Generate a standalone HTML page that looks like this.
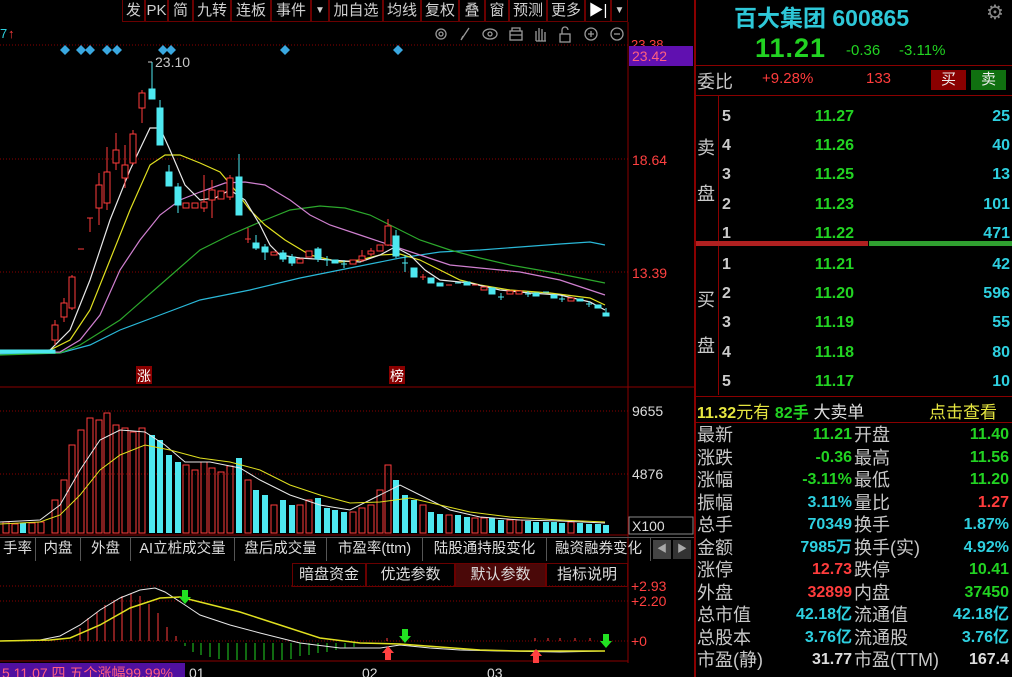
<!DOCTYPE html>
<html><head><meta charset="utf-8"><style>
*{margin:0;padding:0;box-sizing:border-box}
body{width:1012px;height:677px;background:#000;overflow:hidden;position:relative;font-family:"Liberation Sans","Noto Sans CJK SC",sans-serif;color:#c0c0c0}
.a{position:absolute;white-space:nowrap}
.tb{position:absolute;top:0;height:22px;border:1px solid #6a0000;border-top:none;font-size:15px;line-height:21px;text-align:center;color:#d0d0d0}
.r{text-align:right}
.g{color:#22d322}.c{color:#2ed0e0}.rd{color:#ff3c3c}.y{color:#e6e640}
.lab{font-size:18px;color:#c8c8c8}
.num{font-size:16px;font-weight:bold}
.tab{position:absolute;top:538px;height:23px;border-right:1px solid #555;font-size:14.5px;line-height:23px;text-align:center;color:#ddd}
.sb{position:absolute;top:563px;height:24px;border:1px solid #6a0000;font-size:15px;line-height:22px;text-align:center;color:#ddd}
</style></head><body>
<svg class="a" style="left:0;top:0" width="694" height="677">
<!-- borders -->
<line x1="628" y1="22" x2="628" y2="663" stroke="#8a0000"/>
<line x1="0" y1="387" x2="694" y2="387" stroke="#8a0000"/>
<line x1="0" y1="535" x2="628" y2="535" stroke="#8a0000"/>
<line x1="0" y1="661" x2="628" y2="661" stroke="#8a0000"/>
<line x1="0" y1="45" x2="628" y2="45" stroke="#8a0000" stroke-dasharray="1,2"/>
<line x1="0" y1="159" x2="628" y2="159" stroke="#8a0000" stroke-dasharray="1,2"/>
<line x1="0" y1="272" x2="628" y2="272" stroke="#8a0000" stroke-dasharray="1,2"/>
<line x1="0" y1="411" x2="628" y2="411" stroke="#8a0000" stroke-dasharray="1,2"/>
<line x1="0" y1="474" x2="628" y2="474" stroke="#8a0000" stroke-dasharray="1,2"/>
<line x1="0" y1="586" x2="628" y2="586" stroke="#8a0000" stroke-dasharray="1,2"/>
<line x1="0" y1="601" x2="628" y2="601" stroke="#8a0000" stroke-dasharray="1,2"/>
<line x1="0" y1="641" x2="628" y2="641" stroke="#8a0000" stroke-dasharray="1,2"/>
<!-- diamonds -->
<g fill="#3aa8e0">
<path d="M65,45l5,5-5,5-5-5z"/><path d="M81,45l5,5-5,5-5-5z"/><path d="M90,45l5,5-5,5-5-5z"/><path d="M107,45l5,5-5,5-5-5z"/><path d="M117,45l5,5-5,5-5-5z"/><path d="M163,45l5,5-5,5-5-5z"/><path d="M171,45l5,5-5,5-5-5z"/><path d="M285,45l5,5-5,5-5-5z"/><path d="M398,45l5,5-5,5-5-5z"/>
</g>
<!-- icons -->
<g stroke="#999" fill="none" stroke-width="1.3">
<circle cx="441" cy="34" r="5"/><circle cx="441" cy="34" r="2"/>
<path d="M461,40l8-12M461,40l2-4"/>
<ellipse cx="490" cy="34" rx="7" ry="5"/><circle cx="490" cy="34" r="2"/>
<rect x="510" y="31" width="12" height="9"/><path d="M512,31v-3h8v3M510,35h12"/>
<path d="M536,41v-10M539,41v-13M542,41v-12M545,41v-9M536,41h10"/>
<rect x="560" y="34" width="10" height="8"/><path d="M562,34v-4a3,3 0 0 1 6,0"/>
<circle cx="591" cy="34" r="6"/><path d="M588,34h6M591,31v6"/>
<circle cx="617" cy="34" r="6"/><path d="M614,34h6"/>
</g>
<text x="0" y="38" font-size="13" fill="#2ed0e0">7</text><text x="8" y="38" font-size="13" fill="#ff3c3c">↑</text>
<!-- MA lines -->
<g fill="none" stroke-width="1.2">
<polyline stroke="#2ab8d8" points="0,354 60,353 90,345 120,330 160,315 200,300 250,290 300,278 350,268 400,258 440,252 480,250 520,247 560,244 590,242 605,245"/>
<polyline stroke="#2ca82c" points="0,355 60,353 80,345 120,320 160,285 200,250 230,235 260,222 290,210 320,206 345,208 370,215 390,225 420,240 450,250 480,258 510,265 550,272 580,278 605,283"/>
<polyline stroke="#d080d0" points="0,353 60,352 80,340 100,315 120,270 140,240 160,215 180,200 200,192 225,183 245,182 265,185 290,200 310,215 330,225 360,235 390,245 420,255 450,265 480,268 520,272 560,280 590,290 605,295"/>
<polyline stroke="#e0e020" points="0,353 50,350 70,340 90,310 110,260 130,210 150,165 165,155 180,155 200,163 220,172 235,190 250,210 265,225 285,240 310,255 340,262 360,260 380,255 400,254 420,260 440,270 460,280 480,285 510,290 550,293 590,298 605,305"/>
<polyline stroke="#e8e8e8" points="0,352 50,350 70,330 90,280 110,220 130,170 150,128 160,128 170,150 185,185 200,200 215,198 230,190 245,200 260,225 270,245 280,255 300,258 330,260 360,262 380,255 395,247 410,255 425,270 440,280 470,283 500,290 530,293 560,295 590,302 605,310"/>
</g>
<!-- candles: red hollow -->
<g stroke="#ff3c3c" fill="#000" stroke-width="1">
<line x1="55" y1="320" x2="55" y2="345"/><rect x="52" y="325" width="6" height="15"/>
<line x1="64" y1="298" x2="64" y2="322"/><rect x="61" y="303" width="6" height="14"/>
<line x1="72" y1="275" x2="72" y2="310"/><rect x="69" y="277" width="6" height="31"/>
<line x1="78" y1="249" x2="84" y2="249"/>
<path d="M87,218h6M90,218v14"/>
<line x1="99" y1="173" x2="99" y2="225"/><rect x="96" y="185" width="6" height="23"/>
<line x1="107" y1="147" x2="107" y2="210"/><rect x="104" y="172" width="6" height="31"/>
<line x1="116" y1="133" x2="116" y2="170"/><rect x="113" y="150" width="6" height="13"/>
<line x1="125" y1="145" x2="125" y2="188"/><rect x="122" y="165" width="6" height="13"/>
<line x1="133" y1="130" x2="133" y2="165"/><rect x="130" y="134" width="6" height="29"/>
<line x1="142" y1="90" x2="142" y2="123"/><rect x="139" y="93" width="6" height="15"/>
<rect x="183" y="203" width="6" height="5"/><rect x="192" y="203" width="6" height="5"/>
<line x1="204" y1="175" x2="204" y2="212"/><rect x="201" y="202" width="6" height="6"/>
<line x1="212" y1="180" x2="212" y2="218"/><rect x="209" y="190" width="6" height="10"/>
<rect x="218" y="191" width="6" height="8"/>
<line x1="230" y1="175" x2="230" y2="200"/><rect x="227" y="178" width="6" height="19"/>
<line x1="248" y1="228" x2="248" y2="243"/><line x1="245" y1="239" x2="251" y2="239"/>
<rect x="271" y="252" width="6" height="3"/>
<rect x="297" y="259" width="6" height="4"/><rect x="306" y="251" width="6" height="6"/>
<rect x="350" y="260" width="6" height="4"/>
<line x1="362" y1="250" x2="362" y2="262"/><rect x="359" y="256" width="6" height="4"/>
<line x1="371" y1="248" x2="371" y2="256"/><rect x="368" y="251" width="6" height="3"/>
<rect x="377" y="245" width="6" height="6"/>
<line x1="388" y1="219" x2="388" y2="246"/><rect x="385" y="226" width="6" height="19"/>
<line x1="420" y1="277" x2="426" y2="277"/><line x1="423" y1="274" x2="423" y2="280"/>
<line x1="446" y1="285" x2="452" y2="285"/>
<line x1="472" y1="285" x2="478" y2="285"/>
<rect x="481" y="287" width="6" height="3"/>
<rect x="507" y="291" width="6" height="3"/><rect x="516" y="291" width="6" height="3"/>
<rect x="568" y="298" width="6" height="3"/>
</g>
<!-- candles: cyan filled -->
<g stroke="#4ee8f0" fill="#4ee8f0">
<line x1="152" y1="62" x2="152" y2="99"/><rect x="149" y="89" width="6" height="10"/>
<line x1="160" y1="100" x2="160" y2="145"/><rect x="157" y="108" width="6" height="37"/>
<line x1="169" y1="165" x2="169" y2="186"/><rect x="166" y="172" width="6" height="14"/>
<line x1="178" y1="183" x2="178" y2="213"/><rect x="175" y="187" width="6" height="18"/>
<line x1="239" y1="154" x2="239" y2="215"/><rect x="236" y="177" width="6" height="38"/>
<line x1="256" y1="235" x2="256" y2="250"/><rect x="253" y="243" width="6" height="5"/>
<line x1="265" y1="244" x2="265" y2="260"/><rect x="262" y="247" width="6" height="5"/>
<line x1="283" y1="250" x2="283" y2="262"/><rect x="280" y="253" width="6" height="6"/>
<line x1="292" y1="254" x2="292" y2="266"/><rect x="289" y="257" width="6" height="6"/>
<line x1="318" y1="247" x2="318" y2="262"/><rect x="315" y="249" width="6" height="10"/>
<line x1="324" y1="260" x2="330" y2="260"/><line x1="327" y1="256" x2="327" y2="266"/>
<rect x="332" y="260" width="6" height="3"/>
<line x1="341" y1="264" x2="347" y2="264"/><line x1="344" y1="260" x2="344" y2="268"/>
<line x1="396" y1="230" x2="396" y2="258"/><rect x="393" y="236" width="6" height="20"/>
<line x1="402" y1="263" x2="408" y2="263"/><line x1="405" y1="255" x2="405" y2="272"/>
<rect x="411" y="268" width="6" height="9"/>
<rect x="428" y="278" width="6" height="5"/><rect x="437" y="283" width="6" height="3"/>
<line x1="455" y1="283" x2="461" y2="283"/>
<rect x="464" y="282" width="6" height="3"/>
<line x1="489" y1="288" x2="495" y2="288"/><rect x="489" y="288" width="6" height="6"/>
<line x1="498" y1="297" x2="504" y2="297"/><line x1="501" y1="293" x2="501" y2="300"/>
<line x1="525" y1="294" x2="531" y2="294"/><line x1="528" y1="291" x2="528" y2="297"/>
<rect x="533" y="293" width="6" height="3"/>
<line x1="543" y1="292" x2="549" y2="292"/>
<rect x="551" y="295" width="6" height="3"/>
<line x1="559" y1="299" x2="565" y2="299"/><line x1="562" y1="296" x2="562" y2="302"/>
<rect x="577" y="299" width="6" height="2"/>
<line x1="586" y1="304" x2="592" y2="304"/><line x1="589" y1="301" x2="589" y2="307"/>
<rect x="595" y="305" width="6" height="3"/>
<line x1="606" y1="308" x2="606" y2="316"/><rect x="603" y="313" width="6" height="3"/>
<rect x="0" y="350" width="55" height="3"/>
</g>
<path d="M152,62h-4" stroke="#ccc"/><text x="155" y="67" font-size="14" fill="#c8c8c8">23.10</text>
<rect x="136" y="366" width="16" height="18" fill="#8a0000"/><text x="137" y="381" font-size="14" fill="#fff">涨</text>
<rect x="389" y="366" width="16" height="18" fill="#8a0000"/><text x="390" y="381" font-size="14" fill="#fff">榜</text>
<!-- volume -->
<g stroke="#ff3c3c" fill="none">
<rect x="52" y="500" width="6" height="33"/><rect x="61" y="480" width="6" height="53"/><rect x="69" y="445" width="6" height="88"/><rect x="78" y="430" width="6" height="103"/><rect x="87" y="418" width="6" height="115"/><rect x="96" y="420" width="6" height="113"/><rect x="104" y="413" width="6" height="120"/><rect x="113" y="425" width="6" height="108"/><rect x="122" y="428" width="6" height="105"/><rect x="130" y="432" width="6" height="101"/><rect x="139" y="428" width="6" height="105"/>
<rect x="183" y="465" width="6" height="68"/><rect x="192" y="470" width="6" height="63"/><rect x="201" y="462" width="6" height="71"/><rect x="209" y="468" width="6" height="65"/><rect x="218" y="472" width="6" height="61"/><rect x="227" y="466" width="6" height="67"/>
<rect x="245" y="480" width="6" height="53"/><rect x="271" y="505" width="6" height="28"/><rect x="297" y="505" width="6" height="28"/><rect x="306" y="500" width="6" height="33"/><rect x="350" y="512" width="6" height="21"/><rect x="359" y="508" width="6" height="25"/><rect x="368" y="505" width="6" height="28"/><rect x="377" y="490" width="6" height="43"/><rect x="385" y="465" width="6" height="68"/>
<rect x="420" y="505" width="6" height="28"/><rect x="446" y="515" width="6" height="18"/><rect x="472" y="518" width="6" height="15"/><rect x="481" y="518" width="6" height="15"/><rect x="507" y="520" width="6" height="13"/><rect x="516" y="520" width="6" height="13"/><rect x="568" y="522" width="6" height="11"/>
<rect x="3" y="522" width="6" height="11"/><rect x="12" y="524" width="6" height="9"/><rect x="29" y="523" width="6" height="10"/><rect x="38" y="522" width="6" height="11"/>
</g>
<g fill="#4ee8f0">
<rect x="149" y="435" width="6" height="98"/><rect x="157" y="440" width="6" height="93"/><rect x="166" y="455" width="6" height="78"/><rect x="175" y="462" width="6" height="71"/><rect x="236" y="458" width="6" height="75"/><rect x="253" y="490" width="6" height="43"/><rect x="262" y="495" width="6" height="38"/><rect x="280" y="500" width="6" height="33"/><rect x="289" y="505" width="6" height="28"/><rect x="315" y="498" width="6" height="35"/><rect x="324" y="508" width="6" height="25"/><rect x="332" y="510" width="6" height="23"/><rect x="341" y="512" width="6" height="21"/><rect x="393" y="480" width="6" height="53"/><rect x="402" y="495" width="6" height="38"/><rect x="411" y="500" width="6" height="33"/><rect x="428" y="512" width="6" height="21"/><rect x="437" y="514" width="6" height="19"/><rect x="455" y="515" width="6" height="18"/><rect x="464" y="517" width="6" height="16"/><rect x="489" y="518" width="6" height="15"/><rect x="498" y="520" width="6" height="13"/><rect x="525" y="521" width="6" height="12"/><rect x="533" y="522" width="6" height="11"/><rect x="543" y="522" width="6" height="11"/><rect x="551" y="522" width="6" height="11"/><rect x="559" y="523" width="6" height="10"/><rect x="577" y="523" width="6" height="10"/><rect x="586" y="524" width="6" height="9"/><rect x="595" y="524" width="6" height="9"/><rect x="603" y="525" width="6" height="8"/><rect x="20" y="523" width="6" height="10"/>
</g>
<polyline fill="none" stroke="#e8e8e8" points="0,522 40,520 60,505 80,470 100,440 120,430 145,432 165,445 185,462 210,462 240,468 260,480 290,495 320,505 350,510 380,495 400,485 420,495 450,510 480,517 520,520 560,521 605,523"/>
<polyline fill="none" stroke="#e0e020" points="0,524 40,522 60,515 80,495 100,470 120,455 145,445 170,450 200,458 230,462 260,470 290,485 320,495 350,503 380,502 410,498 440,505 470,512 510,517 560,520 605,522"/>
<!-- indicator -->
<g stroke="#ff3c3c">
<line x1="80" y1="641" x2="80" y2="628"/><line x1="88" y1="641" x2="88" y2="618"/><line x1="97" y1="641" x2="97" y2="612"/><line x1="105" y1="641" x2="105" y2="605"/><line x1="114" y1="641" x2="114" y2="600"/><line x1="122" y1="641" x2="122" y2="596"/><line x1="131" y1="641" x2="131" y2="594"/><line x1="140" y1="641" x2="140" y2="596"/><line x1="149" y1="641" x2="149" y2="604"/><line x1="158" y1="641" x2="158" y2="613"/><line x1="167" y1="641" x2="167" y2="627"/><line x1="176" y1="641" x2="176" y2="636"/>
<line x1="387" y1="641" x2="387" y2="638"/><line x1="535" y1="641" x2="535" y2="638"/><line x1="548" y1="641" x2="548" y2="638"/><line x1="560" y1="641" x2="560" y2="638"/><line x1="575" y1="641" x2="575" y2="638"/><line x1="590" y1="641" x2="590" y2="638"/>
</g>
<g stroke="#22d322">
<line x1="185" y1="643" x2="185" y2="646"/><line x1="193" y1="643" x2="193" y2="652"/><line x1="201" y1="643" x2="201" y2="655"/><line x1="210" y1="643" x2="210" y2="657"/><line x1="219" y1="643" x2="219" y2="659"/><line x1="228" y1="643" x2="228" y2="660"/><line x1="237" y1="643" x2="237" y2="660"/><line x1="246" y1="643" x2="246" y2="660"/><line x1="255" y1="643" x2="255" y2="660"/><line x1="264" y1="643" x2="264" y2="660"/><line x1="273" y1="643" x2="273" y2="660"/><line x1="282" y1="643" x2="282" y2="660"/><line x1="291" y1="643" x2="291" y2="659"/><line x1="300" y1="643" x2="300" y2="656"/><line x1="309" y1="643" x2="309" y2="655"/><line x1="318" y1="643" x2="318" y2="653"/><line x1="327" y1="643" x2="327" y2="652"/><line x1="336" y1="643" x2="336" y2="650"/><line x1="345" y1="643" x2="345" y2="648"/><line x1="354" y1="643" x2="354" y2="647"/>
</g>
<polyline fill="none" stroke="#e8e8e8" points="0,641 40,640 60,636 80,625 100,610 120,598 140,590 155,588 165,592 185,605 200,615 230,625 260,633 300,643 340,648 380,648 400,645 430,648 460,650 500,651 560,652 605,651"/>
<polyline fill="none" stroke="#e0e020" stroke-width="1.5" points="0,641 50,640 70,638 100,625 130,608 160,598 180,597 200,602 240,612 280,625 320,638 360,643 400,644 440,647 480,650 520,651 560,651 605,651"/>
<path d="M182,590h6v7h3l-6,7-6-7h3z" fill="#22e022"/>
<path d="M402,629h6v7h3l-6,7-6-7h3z" fill="#22e022"/>
<path d="M603,634h6v7h3l-6,7-6-7h3z" fill="#22e022"/>
<path d="M385,660h6v-7h3l-6-7-6,7h3z" fill="#ff4040"/>
<path d="M533,663h6v-7h3l-6-7-6,7h3z" fill="#ff4040"/>
<!-- right axis labels -->
<text x="631" y="49" font-size="13" fill="#ff4040">23.38</text>
<rect x="629" y="46" width="64" height="20" fill="#6010b0"/>
<text x="632" y="61" font-size="14" fill="#ff6080">23.42</text>
<text x="632" y="165" font-size="14" fill="#ff4040">18.64</text>
<text x="632" y="278" font-size="14" fill="#ff4040">13.39</text>
<text x="632" y="416" font-size="14" fill="#ddd">9655</text>
<text x="632" y="479" font-size="14" fill="#ddd">4876</text>
<rect x="629" y="517" width="64" height="17" fill="none" stroke="#888"/>
<text x="632" y="531" font-size="14" fill="#ddd">X100</text>
<text x="631" y="591" font-size="14" fill="#ff4040">+2.93</text>
<text x="631" y="606" font-size="14" fill="#ff4040">+2.20</text>
<text x="631" y="646" font-size="14" fill="#ff4040">+0</text>
<!-- bottom status -->
<rect x="0" y="663" width="185" height="14" fill="#5010a0"/>
<text x="2" y="678" font-size="14" fill="#ff6080">5 11.07 四 五个涨幅99.99%</text>
<text x="189" y="678" font-size="14" fill="#ddd">01</text>
<text x="362" y="678" font-size="14" fill="#ddd">02</text>
<text x="487" y="678" font-size="14" fill="#ddd">03</text>
</svg>

<!-- toolbar -->
<div class="tb" style="left:122px;width:23px">发</div>
<div class="tb" style="left:145px;width:23px">PK</div>
<div class="tb" style="left:168px;width:25px">简</div>
<div class="tb" style="left:193px;width:38px">九转</div>
<div class="tb" style="left:231px;width:40px">连板</div>
<div class="tb" style="left:271px;width:40px">事件</div>
<div class="tb" style="left:311px;width:18px;font-size:10px">▼</div>
<div class="tb" style="left:329px;width:54px">加自选</div>
<div class="tb" style="left:383px;width:38px">均线</div>
<div class="tb" style="left:421px;width:38px">复权</div>
<div class="tb" style="left:459px;width:26px">叠</div>
<div class="tb" style="left:485px;width:24px">窗</div>
<div class="tb" style="left:509px;width:38px">预测</div>
<div class="tb" style="left:547px;width:38px">更多</div>
<div class="tb" style="left:585px;width:26px;color:#fff">▶|</div>
<div class="tb" style="left:611px;width:17px;font-size:10px">▼</div>

<!-- tabs -->
<div class="a" style="left:0;top:537px;width:694px;height:1px;background:#555"></div>
<div class="tab" style="left:0;width:36px">手率</div>
<div class="tab" style="left:36px;width:45px">内盘</div>
<div class="tab" style="left:81px;width:50px">外盘</div>
<div class="tab" style="left:131px;width:104px">AI立桩成交量</div>
<div class="tab" style="left:235px;width:92px">盘后成交量</div>
<div class="tab" style="left:327px;width:96px">市盈率(ttm)</div>
<div class="tab" style="left:423px;width:124px">陆股通持股变化</div>
<div class="tab" style="left:547px;width:104px">融资融券变化</div>
<div class="a" style="left:653px;top:540px;width:18px;height:19px;background:#444;color:#aaa;font-size:10px;line-height:19px;text-align:center">◀</div>
<div class="a" style="left:673px;top:540px;width:18px;height:19px;background:#333;color:#aaa;font-size:10px;line-height:19px;text-align:center">▶</div>
<div class="sb" style="left:292px;width:74px">暗盘资金</div>
<div class="sb" style="left:366px;width:89px">优选参数</div>
<div class="sb" style="left:455px;width:91px;background:#4a0808">默认参数</div>
<div class="sb" style="left:546px;width:82px">指标说明</div>

<!-- right panel -->
<div class="a" style="left:694px;top:0;width:1px;height:677px;background:#8a0000"></div>
<div class="a" style="left:694px;top:0;width:2px;height:677px;background:#8a0000"></div>
<div class="a" style="left:734px;top:-1px;font-size:23px;font-weight:bold;color:#2ec8d8">百大集团 600865</div>
<div class="a" style="left:986px;top:0;font-size:20px;color:#888">⚙</div>
<div class="a g" style="left:755px;top:33px;font-size:27px;font-weight:bold;letter-spacing:1px">11.21</div>
<div class="a g" style="left:846px;top:42px;font-size:15px">-0.36</div>
<div class="a g" style="left:899px;top:42px;font-size:15px">-3.11%</div>
<div class="a" style="left:696px;top:65px;width:316px;height:1px;background:#8a0000"></div>
<div class="a lab" style="left:697px;top:68px">委比</div>
<div class="a rd" style="left:762px;top:70px;font-size:15px">+9.28%</div>
<div class="a rd" style="left:866px;top:70px;font-size:15px">133</div>
<div class="a" style="left:931px;top:70px;width:35px;height:20px;background:#8a0000;color:#eee;font-size:15px;text-align:center;line-height:20px">买</div>
<div class="a" style="left:971px;top:70px;width:35px;height:20px;background:#107010;color:#eee;font-size:15px;text-align:center;line-height:20px">卖</div>
<div class="a" style="left:696px;top:95px;width:316px;height:1px;background:#8a0000"></div>
<div class="a" style="left:718px;top:95px;width:1px;height:300px;background:#8a0000"></div>
<div class="a" style="left:696px;top:241px;width:172px;height:5px;background:#b02020"></div>
<div class="a" style="left:869px;top:241px;width:143px;height:5px;background:#30a030"></div>
<div class="a lab" style="left:697px;top:134px">卖</div>
<div class="a lab" style="left:697px;top:180px">盘</div>
<div class="a lab" style="left:697px;top:286px">买</div>
<div class="a lab" style="left:697px;top:332px">盘</div>
<div class="a" style="left:722px;top:102px;font-size:16px;line-height:29.2px;color:#ccc;font-weight:bold">5<br>4<br>3<br>2<br>1</div>
<div class="a g num r" style="left:780px;top:102px;width:74px;line-height:29.2px">11.27<br>11.26<br>11.25<br>11.23<br>11.22</div>
<div class="a c num r" style="left:940px;top:102px;width:70px;line-height:29.2px">25<br>40<br>13<br>101<br>471</div>
<div class="a" style="left:722px;top:250px;font-size:16px;line-height:29.2px;color:#ccc;font-weight:bold">1<br>2<br>3<br>4<br>5</div>
<div class="a g num r" style="left:780px;top:250px;width:74px;line-height:29.2px">11.21<br>11.20<br>11.19<br>11.18<br>11.17</div>
<div class="a c num r" style="left:940px;top:250px;width:70px;line-height:29.2px">42<br>596<br>55<br>80<br>10</div>
<div class="a" style="left:696px;top:396px;width:316px;height:1px;background:#8a0000"></div>
<div class="a y" style="left:697px;top:398px;font-size:17px"><b style="font-size:16px">11.32</b>元有 <b class="g" style="font-size:16px">82手</b> <span style="color:#ddd">大卖单</span></div>
<div class="a y" style="left:929px;top:398px;font-size:17px">点击查看</div>
<div class="a" style="left:696px;top:422px;width:316px;height:1px;background:#8a0000"></div>
<div class="a lab" style="left:697px;top:424px;line-height:22.5px">最新<br>涨跌<br>涨幅<br>振幅<br>总手<br>金额<br>涨停<br>外盘<br>总市值<br>总股本<br>市盈(静)</div>
<div class="a num r" style="left:760px;top:424px;width:92px;line-height:22.5px"><span class="g">11.21</span><br><span class="g">-0.36</span><br><span class="g">-3.11%</span><br><span class="c">3.11%</span><br><span class="c">70349</span><br><span class="c">7985万</span><br><span class="rd">12.73</span><br><span class="rd">32899</span><br><span class="c">42.18亿</span><br><span class="c">3.76亿</span><br><span style="color:#ddd">31.77</span></div>
<div class="a lab" style="left:854px;top:424px;line-height:22.5px">开盘<br>最高<br>最低<br>量比<br>换手<br>换手(实)<br>跌停<br>内盘<br>流通值<br>流通股<br>市盈(TTM)</div>
<div class="a num r" style="left:920px;top:424px;width:89px;line-height:22.5px"><span class="g">11.40</span><br><span class="g">11.56</span><br><span class="g">11.20</span><br><span class="rd">1.27</span><br><span class="c">1.87%</span><br><span class="c">4.92%</span><br><span class="g">10.41</span><br><span class="g">37450</span><br><span class="c">42.18亿</span><br><span class="c">3.76亿</span><br><span style="color:#ddd">167.4</span></div>
</body></html>
